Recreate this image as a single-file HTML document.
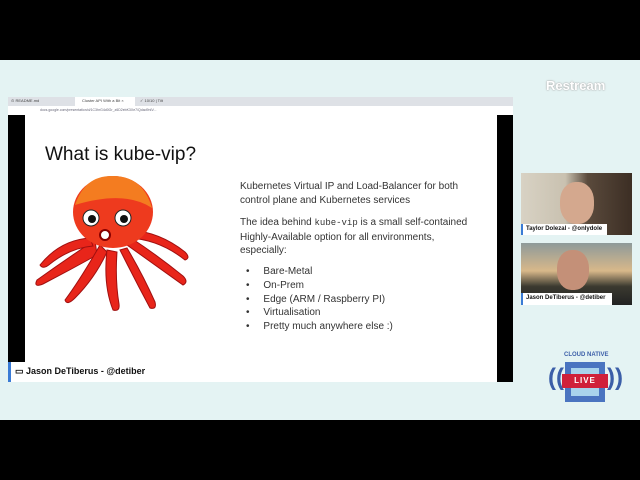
<!DOCTYPE html>
<html><head><style>
body{margin:0;width:640px;height:480px;background:#e4f3f3;position:relative;overflow:hidden;font-family:"Liberation Sans",sans-serif}
.a{position:absolute}
</style></head><body>
<div class="a" style="left:0;top:0;width:640px;height:60px;background:#000"></div>
<div class="a" style="left:0;top:420px;width:640px;height:60px;background:#000"></div>
<div class="a" style="left:546px;top:78px;font:bold 13px 'Liberation Sans';color:#fff;text-shadow:0 0 1px #999,0 0 2px #bbb">Restream</div>
<div class="a" style="left:8px;top:97px;width:505px;height:9px;background:#dee1e6"></div>
<div class="a" style="left:75px;top:97px;width:60px;height:9px;background:#fff"></div>
<div class="a" style="left:11px;top:98px;font-size:4px;color:#444">⊙ README.md</div>
<div class="a" style="left:82px;top:98px;font-size:4px;color:#444">Cluster API With a Bit ×</div>
<div class="a" style="left:140px;top:98px;font-size:4px;color:#444">✓ 10/10 | Tilt</div>
<div class="a" style="left:8px;top:106px;width:505px;height:9px;background:#fff;border-bottom:1px solid #ddd"></div>
<div class="a" style="left:40px;top:108px;width:410px;height:5px;font-size:3.5px;color:#667">docs.google.com/presentation/d/1C3hrG4d0Gr_z6D2ebK3Xe7/Qdad9nIV...</div>
<div class="a" style="left:8px;top:115px;width:17px;height:267px;background:#000"></div>
<div class="a" style="left:497px;top:115px;width:16px;height:267px;background:#000"></div>
<div class="a" style="left:25px;top:115px;width:472px;height:267px;background:#fff"></div>
<div class="a" style="left:45px;top:144px;font-size:19px;color:#111">What is kube-vip?</div>
<div class="a" style="left:240px;top:180px;width:240px;font-size:10px;line-height:13.5px;color:#333">Kubernetes Virtual IP and Load-Balancer for both control plane and Kubernetes services</div>
<div class="a" style="left:240px;top:216px;width:250px;font-size:10px;line-height:13.5px;color:#333">The idea behind <span style="font-family:'Liberation Mono';font-size:9px">kube-vip</span> is a small self-contained<br>Highly-Available option for all environments,<br>especially:</div>
<div class="a" style="left:246px;top:265px;font-size:10px;line-height:13.8px;color:#333">
<div>•&nbsp;&nbsp;&nbsp;&nbsp;&nbsp;Bare-Metal</div><div>•&nbsp;&nbsp;&nbsp;&nbsp;&nbsp;On-Prem</div><div>•&nbsp;&nbsp;&nbsp;&nbsp;&nbsp;Edge (ARM / Raspberry PI)</div><div>•&nbsp;&nbsp;&nbsp;&nbsp;&nbsp;Virtualisation</div><div>•&nbsp;&nbsp;&nbsp;&nbsp;&nbsp;Pretty much anywhere else :)</div></div>
<svg class="a" style="left:25px;top:170px" width="180" height="150">
<g fill="#e8251a" stroke="#a01010" stroke-width="1">
<path d="M70 70 Q40 90 12 110 Q8 118 18 114 Q45 100 72 85Z"/>
<path d="M75 75 Q55 110 40 130 Q42 136 50 128 Q70 108 82 82Z"/>
<path d="M82 80 Q78 115 88 140 Q95 142 94 134 Q90 110 92 82Z"/>
<path d="M95 80 Q110 110 125 138 Q132 140 130 132 Q118 105 102 78Z"/>
<path d="M102 75 Q130 95 158 115 Q164 112 158 106 Q132 85 106 68Z"/>
<path d="M105 68 Q135 70 160 90 Q166 88 160 82 Q135 62 105 60Z"/>
<path d="M65 68 Q35 70 15 95 Q18 100 25 94 Q45 78 68 76Z"/>
</g>
<ellipse cx="88" cy="42" rx="40" ry="36" fill="#ee3a1e"/>
<path d="M50 35 Q60 5 88 6 Q118 6 127 38 Q100 20 50 35Z" fill="#f47c20"/>
<circle cx="66" cy="48" r="8" fill="#fff" stroke="#222"/><circle cx="67" cy="49" r="4" fill="#111"/>
<circle cx="98" cy="48" r="8" fill="#fff" stroke="#222"/><circle cx="99" cy="49" r="4" fill="#111"/>
<circle cx="80" cy="65" r="5" fill="#fff" stroke="#800" stroke-width="2"/>
</svg>
<div class="a" style="left:8px;top:362px;width:152px;height:20px;background:#fff;border-left:3px solid #3a7bd5;box-sizing:border-box"></div>
<div class="a" style="left:15px;top:366px;font:bold 9px 'Liberation Sans';color:#111">▭ Jason DeTiberus - @detiber</div>
<div class="a" style="left:521px;top:173px;width:111px;height:62px;background:linear-gradient(90deg,#d8d2c4 0%,#c9c1b0 40%,#5a4a3c 60%,#3c2e24 100%)"></div>
<div class="a" style="left:560px;top:182px;width:34px;height:42px;border-radius:45%;background:#d4a88e"></div>
<div class="a" style="left:521px;top:224px;width:86px;height:11px;background:#fff;border-left:2px solid #3a7bd5;box-sizing:border-box;font:bold 6px 'Liberation Sans';padding:2px 3px;color:#111">Taylor Dolezal - @onlydole</div>
<div class="a" style="left:521px;top:243px;width:111px;height:62px;background:linear-gradient(180deg,#8e9a9a 0%,#d8b88a 45%,#3b3a30 70%,#222 100%)"></div>
<div class="a" style="left:557px;top:250px;width:32px;height:40px;border-radius:45%;background:#c49078"></div>
<div class="a" style="left:521px;top:293px;width:91px;height:12px;background:#fff;border-left:2px solid #3a7bd5;box-sizing:border-box;font:bold 6px 'Liberation Sans';padding:2px 3px;color:#111">Jason DeTiberus - @detiber</div>
<div class="a" style="left:564px;top:352px;font:bold 6px 'Liberation Sans';color:#3b5ea8">CLOUD NATIVE</div>
<div class="a" style="left:565px;top:362px;width:40px;height:40px;background:#4a74c0"></div>
<div class="a" style="left:571px;top:368px;width:28px;height:28px;background:#a9d3ec"></div>
<div class="a" style="left:562px;top:374px;width:46px;height:14px;background:#d0203a;color:#fff;font:bold 8px 'Liberation Sans';text-align:center;line-height:14px;letter-spacing:1px">LIVE</div>
<div class="a" style="left:548px;top:364px;font:bold 24px 'Liberation Sans';color:#3b5ea8">((</div>
<div class="a" style="left:607px;top:364px;font:bold 24px 'Liberation Sans';color:#3b5ea8">))</div>
</body></html>
